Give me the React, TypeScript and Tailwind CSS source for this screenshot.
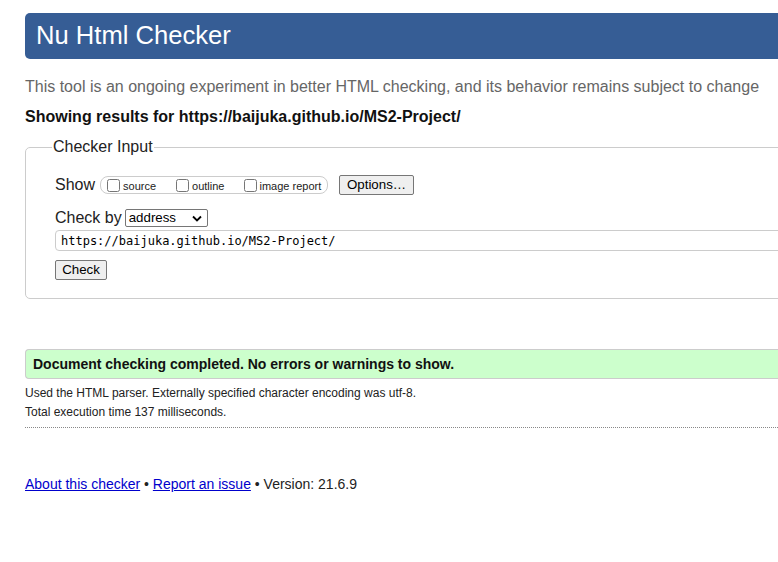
import React from "react";

const url = "https://baijuka.github.io/MS2-Project/";

export default function App() {
  return (
    <div className="w-[778px] h-[562px] overflow-hidden bg-white font-['Liberation_Sans',Arial,sans-serif] text-[#222]">
      <div className="w-[1100px] pl-[25px] pt-[13px]">
        {/* Header */}
        <div className="h-[46px] bg-[#365d95] rounded-[5px] pl-[11px] flex items-center">
          <h1 className="text-[25.6px] text-white leading-none">Nu Html Checker</h1>
        </div>

        <p className="mt-[18px] text-[16px] leading-[20px] text-[#666]">
          This tool is an ongoing experiment in better HTML checking, and its behavior remains subject to change
        </p>
        <p className="mt-[10px] text-[16px] leading-[20px] font-bold text-[#111]">
          Showing results for {url}
        </p>

        {/* Checker Input */}
        <fieldset className="mt-[10px] border border-[#ccc] rounded-[5px] pl-[26px] pr-4 h-[162px]">
          <legend className="px-[1px] text-[16px] leading-[20px] text-[#222]">Checker Input</legend>

          <div className="ml-[3px] mt-[18px] flex items-center h-[20px]">
            <span className="text-[16px]">Show</span>
            <div className="ml-[5px] h-[18px] w-[228px] border border-[#ccc] rounded-[8px] flex items-center pl-[6px] text-[11px]">
              <label className="flex items-center">
                <input type="checkbox" className="m-0 w-[13px] h-[13px] mr-[3px]" />
                <span className="mt-[3px]">source</span>
              </label>
              <label className="flex items-center ml-[20px]">
                <input type="checkbox" className="m-0 w-[13px] h-[13px] mr-[3px]" />
                <span className="mt-[3px]">outline</span>
              </label>
              <label className="flex items-center ml-[20px]">
                <input type="checkbox" className="m-0 w-[13px] h-[13px] mr-[2px]" />
                <span className="mt-[3px]">image report</span>
              </label>
            </div>
            <button className="ml-[11px] h-[20px] w-[75px] bg-[#efefef] border border-[#767676] rounded-[2px] text-[13.3px] text-black leading-none">
              Options…
            </button>
          </div>

          <div className="ml-[3px] mt-[13px] flex items-center h-[20px]">
            <span className="text-[16px]">Check by</span>
            <div className="ml-[3px] h-[18px] w-[83px] border border-[#767676] rounded-[2px] flex items-center justify-between pl-[3px] pr-[5px] text-[13.3px] text-black">
              <span>address</span>
              <svg width="10" height="7" viewBox="0 0 10 7">
                <path d="M1 1.5 L5 5.5 L9 1.5" fill="none" stroke="#000" strokeWidth="1.8" />
              </svg>
            </div>
          </div>

          <div className="ml-[3px] mt-[2px] h-[21px] w-[1000px] border border-[#ccc] rounded-[4px] flex items-center pl-[5px] font-['DejaVu_Sans_Mono',monospace] text-[12px] text-black">
            {url}
          </div>

          <button className="ml-[3px] mt-[9px] h-[20px] w-[52px] bg-[#efefef] border border-[#767676] rounded-[2px] text-[13.3px] text-black leading-none">
            Check
          </button>
        </fieldset>

        {/* Result */}
        <div className="mt-[50px] h-[30px] bg-[#ccffcc] border border-[#ccc] border-r-0 rounded-l-[4px] flex items-center pl-[7px]">
          <p className="text-[14px] font-bold text-[#111]">Document checking completed. No errors or warnings to show.</p>
        </div>

        <p className="mt-[5px] text-[12px] leading-[19px] text-[#222]">
          Used the HTML parser. Externally specified character encoding was utf-8.
        </p>
        <p className="text-[12px] leading-[19px] text-[#222]">Total execution time 137 milliseconds.</p>

        <div className="mt-[5px] border-t border-dotted border-[#888]" />

        <p className="mt-[47px] text-[14px] leading-[18px] text-[#222]">
          <a href="#" className="text-[#0000cc] underline">About this checker</a> •{" "}
          <a href="#" className="text-[#0000cc] underline">Report an issue</a> • Version: 21.6.9
        </p>
      </div>
    </div>
  );
}
